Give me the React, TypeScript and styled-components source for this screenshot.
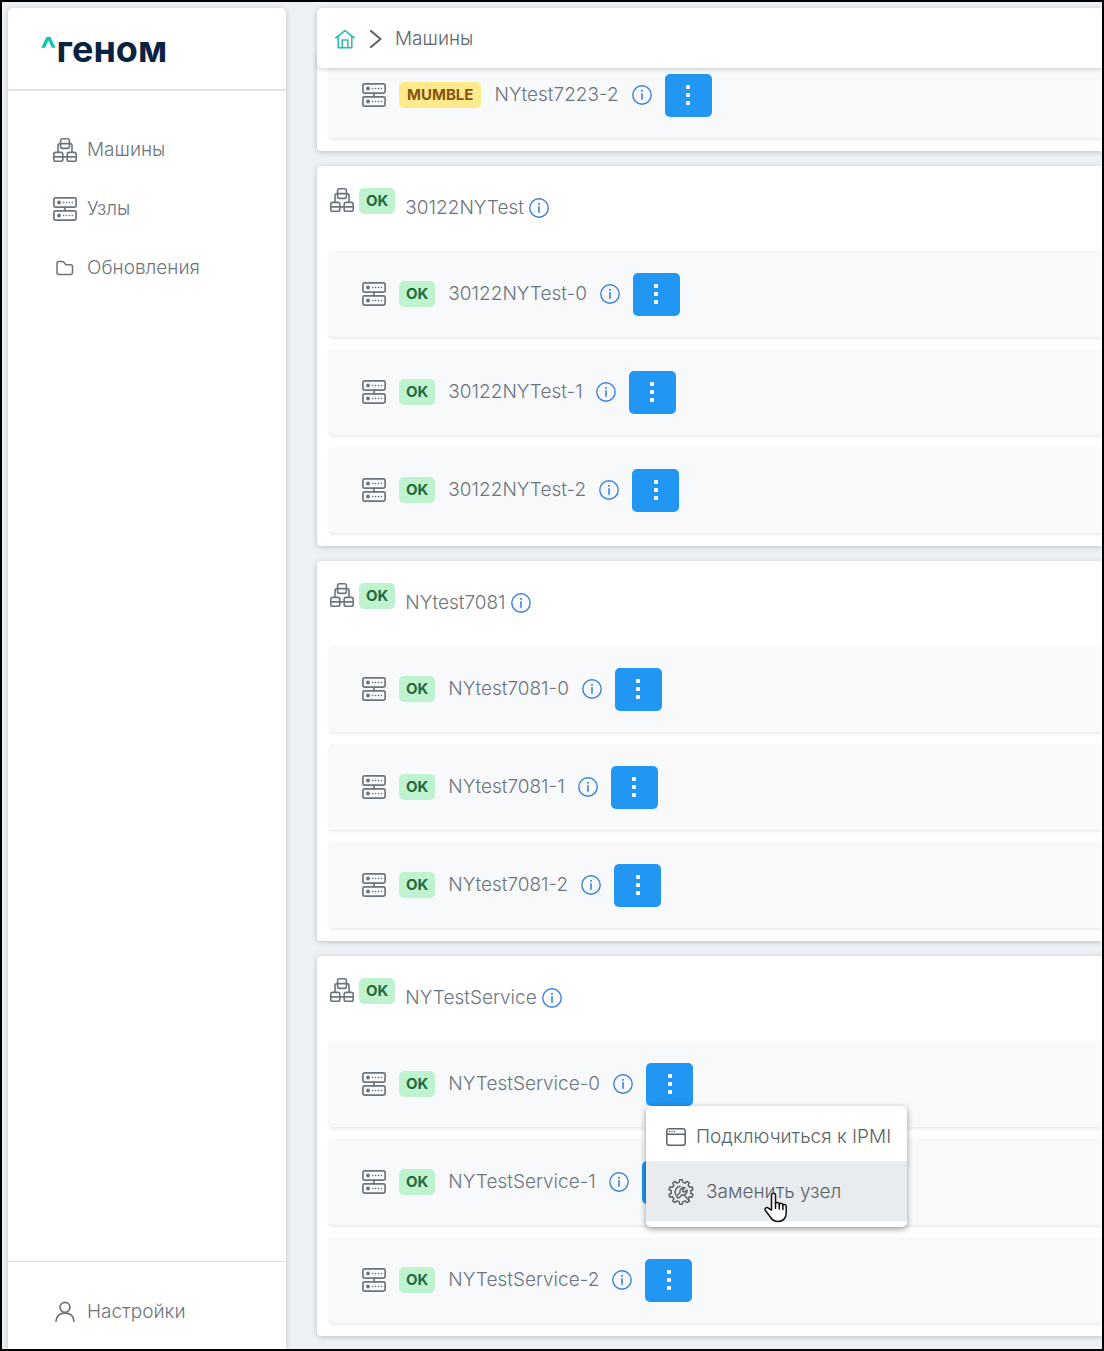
import React from "react";
import styled, { createGlobalStyle, css } from "styled-components";

const GlobalStyle = createGlobalStyle`
  *, *::before, *::after { box-sizing: border-box; }
  body {
    margin: 0;
    background: #edf0f5;
    color: #6c757d;
    font-family: Inter, "Noto Sans", "Liberation Sans", sans-serif;
    font-size: 19px;
    font-weight: 300;
    line-height: 24px;
  }
  button { font: inherit; color: inherit; }
  svg { display: block; flex: none; }
`;

const Shell = styled.div`
  display: flex;
  gap: 31px;
  min-height: 100vh;
  padding: 6px 0 0 6px;
  border: 2px solid #000;
  overflow: hidden;
`;

const panel = css`
  background: #fff;
  box-shadow: 0 1px 5px rgba(60, 66, 74, 0.28);
`;

const Sidebar = styled.aside`
  ${panel}
  display: flex;
  flex-direction: column;
  flex: none;
  width: 278px;
  border-radius: 5px 5px 0 0;
`;

const Brand = styled.a`
  display: flex;
  align-items: center;
  height: 83px;
  padding: 0 32px;
  border-bottom: 2px solid #dfe1e4;
  color: #0a2342;
  font-size: 36px;
  font-weight: 700;
  line-height: 40px;
  text-decoration: none;
`;

const Caret = styled.span`
  color: #12c4b8;
  font-size: 34px;
`;

const Nav = styled.nav`
  display: flex;
  flex-direction: column;
  gap: 35px;
  padding: 47px 45px;
`;

const NavLink = styled.a`
  display: flex;
  align-items: center;
  gap: 10px;
  color: inherit;
  text-decoration: none;
`;

const SideFooter = styled.div`
  margin-top: auto;
  padding: 38px 45px 25px;
  border-top: 1px solid #dcdfe3;
`;

const Main = styled.main`
  display: flex;
  flex-direction: column;
  flex: 1;
  min-width: 0;
`;

const TopBar = styled.header`
  ${panel}
  position: relative;
  z-index: 1;
  display: flex;
  align-items: center;
  gap: 13px;
  height: 60px;
  padding: 1px 18px 0;
  border-radius: 5px 0 0 5px;
  color: #5f666d;
`;

const HomeLink = styled.a`
  color: #20bdb2;
`;

const Groups = styled.div`
  display: flex;
  flex-direction: column;
  gap: 15px;
  margin-top: -16px;
  padding-bottom: 12px;
`;

const Card = styled.section`
  ${panel}
  padding: 0 0 13px 12px;
  border-radius: 4px 0 0 4px;
`;

const CardHead = styled.div`
  display: flex;
  align-items: flex-start;
  gap: 5px;
  height: 85px;
  padding: 22px 0 0 1px;
`;

const CardTitle = styled.h2`
  display: flex;
  align-items: center;
  gap: 5px;
  margin: 0;
  padding: 8px 0 0 5px;
  font-size: 19px;
  font-weight: 300;
`;

const Rows = styled.ul`
  display: flex;
  flex-direction: column;
  gap: 12px;
  margin: 0;
  padding: 0;
  list-style: none;
`;

const Row = styled.li`
  display: flex;
  align-items: center;
  gap: 13px;
  height: 86px;
  padding-left: 33px;
  border-radius: 4px 0 0 4px;
  background: #f8f9fb;
  box-shadow: 0 2px 3px rgba(0, 0, 0, 0.08);
`;

const Badge = styled.span<{ $tone: "ok" | "warn" }>`
  padding: ${(p) => (p.$tone === "ok" ? "0 7px" : "0 8px")};
  border-radius: 5px;
  font-size: 15px;
  font-weight: 700;
  line-height: 26px;
  color: ${(p) => (p.$tone === "ok" ? "#256b3c" : "#855511")};
  background: ${(p) => (p.$tone === "ok" ? "#bff3d0" : "#fdea8c")};
`;

const InfoButton = styled.button`
  padding: 0;
  border: 0;
  background: none;
  color: #3b82dc;
`;

const MenuAnchor = styled.div`
  position: relative;
`;

const MoreButton = styled.button`
  display: flex;
  align-items: center;
  justify-content: center;
  width: 47px;
  height: 43px;
  padding: 0;
  border: 0;
  border-radius: 5px;
  background: #2196f3;
  color: #fff;
`;

const Menu = styled.div`
  position: absolute;
  z-index: 2;
  top: 100%;
  left: 0;
  width: 261px;
  padding-bottom: 6px;
  border-radius: 5px;
  background: #fff;
  box-shadow: 0 2px 6px rgba(0, 0, 0, 0.4);
`;

const MenuItem = styled.button<{ $active?: boolean }>`
  position: relative;
  display: flex;
  align-items: center;
  gap: ${(p) => (p.$active ? "12px" : "10px")};
  width: 100%;
  height: ${(p) => (p.$active ? "60px" : "55px")};
  padding: ${(p) => (p.$active ? "2px 22px 0" : "8px 20px 0")};
  border: 0;
  border-radius: ${(p) => (p.$active ? "0" : "5px 5px 0 0")};
  background: ${(p) => (p.$active ? "#e9ecef" : "transparent")};
  color: #5c636a;
  white-space: nowrap;
`;

const Pointer = styled.svg`
  position: absolute;
  left: 118px;
  top: 31px;
`;

const line = { fill: "none", stroke: "currentColor", strokeLinecap: "round", strokeLinejoin: "round" } as const;

const ClusterIcon = () => (
  <svg width="24" height="24" viewBox="0 0 24 24" {...line} strokeWidth="1.6" aria-hidden="true">
    <rect x="7.6" y="0.8" width="8.8" height="9.600" rx="1.800" />
    <path d="M7.600 5.600h8.800M7.400 5.600H7a2 2 0 0 0-2 2v6.400M16.600 5.600h.4a2 2 0 0 1 2 2v6.400M9.800 18.900h4.400" />
    <rect x="0.800" y="14.400" width="9" height="8.800" rx="1.800" />
    <path d="M0.800 18.900h9M14.200 18.900h9" />
    <rect x="14.200" y="14.400" width="9" height="8.800" rx="1.800" />
  </svg>
);

const ServerIcon = () => (
  <svg width="24" height="24" viewBox="0 0 24 24" {...line} strokeWidth="1.700" aria-hidden="true">
    <rect x="0.900" y="0.900" width="22.200" height="9.200" rx="1.600" />
    <rect x="0.900" y="13.900" width="22.200" height="9.200" rx="1.600" />
    <path d="M12 10v4" />
    <circle cx="6" cy="5.500" r="1.900" fill="currentColor" stroke="none" />
    <circle cx="6" cy="18.500" r="1.900" fill="currentColor" stroke="none" />
    <path d="M10.500 5.500h.2M13.400 5.500h.2M16.300 5.500h.2M19.200 5.500h.2M10.500 18.500h.2M13.400 18.500h.2M16.300 18.500h.2M19.200 18.500h.2" strokeWidth="1.500" />
  </svg>
);

const FolderIcon = () => (
  <svg width="24" height="24" viewBox="0 0 24 24" {...line} strokeWidth="1.500" aria-hidden="true">
    <path d="M4 7.300C4 6.200 4.700 5.500 5.800 5.500h3.500c.7 0 1.200.3 1.600.8l1.900 2.400h4.700c1.200 0 2 .8 2 2v5.900c0 1.200-.8 2-2 2H6c-1.200 0-2-.8-2-2z" />
  </svg>
);

const UserIcon = () => (
  <svg width="24" height="24" viewBox="0 0 24 24" {...line} strokeWidth="1.700" aria-hidden="true">
    <circle cx="12" cy="7.300" r="5" />
    <path d="M3 21.200c.5-5 4-8 9-8s8.500 3 9 8" />
  </svg>
);

const HomeIcon = () => (
  <svg width="20" height="20" viewBox="0 0 20 20" {...line} strokeWidth="1.500" aria-hidden="true">
    <path d="M.8 8.800 10 1.700l9.200 7.100M3.200 7.500v11.200h13.600V7.500" />
    <path d="M7.200 18.500v-7.400h5.600v7.400" />
  </svg>
);

const ChevronIcon = () => (
  <svg width="14" height="20" viewBox="0 0 14 20" {...line} strokeWidth="2.200" aria-hidden="true">
    <path d="m3 2 9.500 8L3 18" />
  </svg>
);

const InfoIcon = () => (
  <svg width="20" height="20" viewBox="0 0 20 20" {...line} strokeWidth="1.400" aria-hidden="true">
    <circle cx="10" cy="10" r="9.200" />
    <path d="M10 8.700v5.500" strokeWidth="1.600" />
    <path d="M10 5.800v.1" strokeWidth="1.900" />
  </svg>
);

const DotsIcon = () => (
  <svg width="6" height="22" viewBox="0 0 6 22" fill="currentColor" aria-hidden="true">
    <rect x="1" y="1" width="4" height="4" rx="1" />
    <rect x="1" y="9" width="4" height="4" rx="1" />
    <rect x="1" y="17" width="4" height="4" rx="1" />
  </svg>
);

const WindowIcon = () => (
  <svg width="20" height="18" viewBox="0 0 20 18" {...line} strokeWidth="1.500" aria-hidden="true">
    <rect x="0.800" y="0.800" width="18.400" height="16.400" rx="2.200" />
    <path d="M1 6.300h18" />
    <path d="M3.600 3.600h.1M6 3.600h.1M8.400 3.600h.1" strokeWidth="1.500" />
  </svg>
);

const gearPath = (() => {
  const pts: string[] = [];
  for (let i = 0; i < 10; i++) {
    [[-0.3, 9.8], [-0.17, 12.2], [0.17, 12.2], [0.3, 9.8]].forEach(([off, r]) => {
      const a = ((i + off) * Math.PI * 2) / 10;
      pts.push(`${(13 + r * Math.sin(a)).toFixed(2)} ${(13 - r * Math.cos(a)).toFixed(2)}`);
    });
  }
  return `M${pts.join("L")}Z`;
})();

const GearWrenchIcon = () => (
  <svg width="26" height="26" viewBox="0 0 26 26" {...line} strokeWidth="1.500" aria-hidden="true">
    <path d={gearPath} />
    <path d="M7.600 15.600A6 6 0 0 1 12 7.200" />
    <path d="M16.800 8.700a4 4 0 0 0-4.800 5l-2.800 2.600a1.500 1.500 0 0 0 2.200 2.200l2.700-2.700a4 4 0 0 0 4.900-4.900l-2.200 2.100-1.800-.4-.4-1.800z" />
    <path d="m16.500 16.500 5 5" />
  </svg>
);

const HandPointer = () => (
  <Pointer width="24" height="31" viewBox="0 0 24 31" aria-hidden="true">
    <path
      d="M7.500 18V3.200c0-2.500 4-2.500 4 0v8.300c.4-1.700 3.800-1.300 3.800.7.500-1.400 3.600-1 3.600.9.600-1.100 3.300-.7 3.300 1.300V21c0 5-3.200 8.500-8 8.500-4 0-6-1.500-7.500-4L1.400 18.500c-1.200-2.200 1.400-4 3.200-2.200z"
      fill="#fff"
      stroke="#111"
      strokeWidth="1.500"
      strokeLinejoin="round"
    />
    <path d="M11.500 11.500v5M15.300 12.500v4.500M18.900 13.500v4" fill="none" stroke="#111" strokeWidth="1.500" strokeLinecap="round" />
  </Pointer>
);

type Status = "OK" | "MUMBLE";
type Node = { name: string; status: Status; menuOpen?: boolean };
type Group = { name?: string; nodes: Node[] };

const groups: Group[] = [
  { nodes: [{ name: "NYtest7223-2", status: "MUMBLE" }] },
  ...["30122NYTest", "NYtest7081", "NYTestService"].map((name) => ({
    name,
    nodes: [0, 1, 2].map((i) => ({
      name: `${name}-${i}`,
      status: "OK" as Status,
      menuOpen: name === "NYTestService" && i === 0,
    })),
  })),
];

const StatusBadge = ({ status }: { status: Status }) => (
  <Badge $tone={status === "OK" ? "ok" : "warn"}>{status}</Badge>
);

const Info = ({ name }: { name: string }) => (
  <InfoButton type="button" aria-label={`Информация: ${name}`}>
    <InfoIcon />
  </InfoButton>
);

const NodeRow = ({ node }: { node: Node }) => (
  <Row>
    <ServerIcon />
    <StatusBadge status={node.status} />
    <span>{node.name}</span>
    <Info name={node.name} />
    <MenuAnchor>
      <MoreButton type="button" aria-label={`Действия: ${node.name}`} aria-expanded={!!node.menuOpen}>
        <DotsIcon />
      </MoreButton>
      {node.menuOpen && (
        <Menu role="menu">
          <MenuItem type="button" role="menuitem">
            <WindowIcon />
            Подключиться к IPMI
          </MenuItem>
          <MenuItem type="button" role="menuitem" $active>
            <GearWrenchIcon />
            Заменить узел
            <HandPointer />
          </MenuItem>
        </Menu>
      )}
    </MenuAnchor>
  </Row>
);

export default function App() {
  return (
    <>
      <GlobalStyle />
      <Shell>
        <Sidebar>
          <Brand href="#">
            <Caret>^</Caret>геном
          </Brand>
          <Nav>
            <NavLink href="#machines"><ClusterIcon />Машины</NavLink>
            <NavLink href="#nodes"><ServerIcon />Узлы</NavLink>
            <NavLink href="#updates"><FolderIcon />Обновления</NavLink>
          </Nav>
          <SideFooter>
            <NavLink href="#settings"><UserIcon />Настройки</NavLink>
          </SideFooter>
        </Sidebar>
        <Main>
          <TopBar>
            <HomeLink href="#" aria-label="Главная"><HomeIcon /></HomeLink>
            <ChevronIcon />
            <span>Машины</span>
          </TopBar>
          <Groups>
            {groups.map((group, i) => (
              <Card key={i}>
                {group.name && (
                  <CardHead>
                    <ClusterIcon />
                    <StatusBadge status="OK" />
                    <CardTitle>
                      {group.name}
                      <Info name={group.name} />
                    </CardTitle>
                  </CardHead>
                )}
                <Rows>
                  {group.nodes.map((node) => (
                    <NodeRow key={node.name} node={node} />
                  ))}
                </Rows>
              </Card>
            ))}
          </Groups>
        </Main>
      </Shell>
    </>
  );
}
